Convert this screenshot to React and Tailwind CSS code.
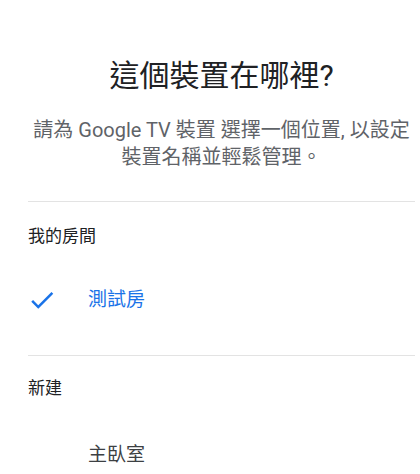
import React from "react";

const font = { fontFamily: 'Roboto, "Noto Sans CJK TC", sans-serif' };

const CheckIcon = () => (
  <svg width="30" height="30" viewBox="0 0 24 24" className="shrink-0 text-[#1a73e8]" fill="currentColor">
    <path d="M9 16.17L4.83 12l-1.42 1.41L9 19 21 7l-1.41-1.41z" />
  </svg>
);

const rooms = [{ name: "測試房", selected: true }];

export default function App() {
  return (
    <div className="w-[420px] h-[474px] overflow-hidden bg-white pl-[28px] pr-[5px]" style={font}>
      {/* Header */}
      <h1 className="mt-[57px] text-center text-[30px] leading-[38px] font-normal text-[#202124]">
        這個裝置在哪裡?
      </h1>
      <p className="mt-[22px] text-center text-[20px] leading-[27px] text-[#5f6368]">
        請為 Google TV 裝置 選擇一個位置, 以設定
        <br />
        裝置名稱並輕鬆管理。
      </p>

      {/* My rooms */}
      <div className="mt-[30px] border-t border-[#e3e3e3]">
        <div className="mt-[22px] text-[17px] leading-[24px] text-[#202124]">我的房間</div>
        {rooms.map((room) => (
          <div key={room.name} className="mt-[38px] flex items-center h-[28px] -ml-[1px]">
            <CheckIcon />
            <span className="ml-[31px] text-[19px] leading-[28px] text-[#1a73e8]">{room.name}</span>
          </div>
        ))}
      </div>

      {/* New */}
      <div className="mt-[41px] border-t border-[#e3e3e3]">
        <div className="mt-[20px] text-[17px] leading-[24px] text-[#202124]">新建</div>
        <div className="mt-[41px] pl-[60px] text-[19px] leading-[28px] text-[#3c4043]">主臥室</div>
      </div>
    </div>
  );
}
